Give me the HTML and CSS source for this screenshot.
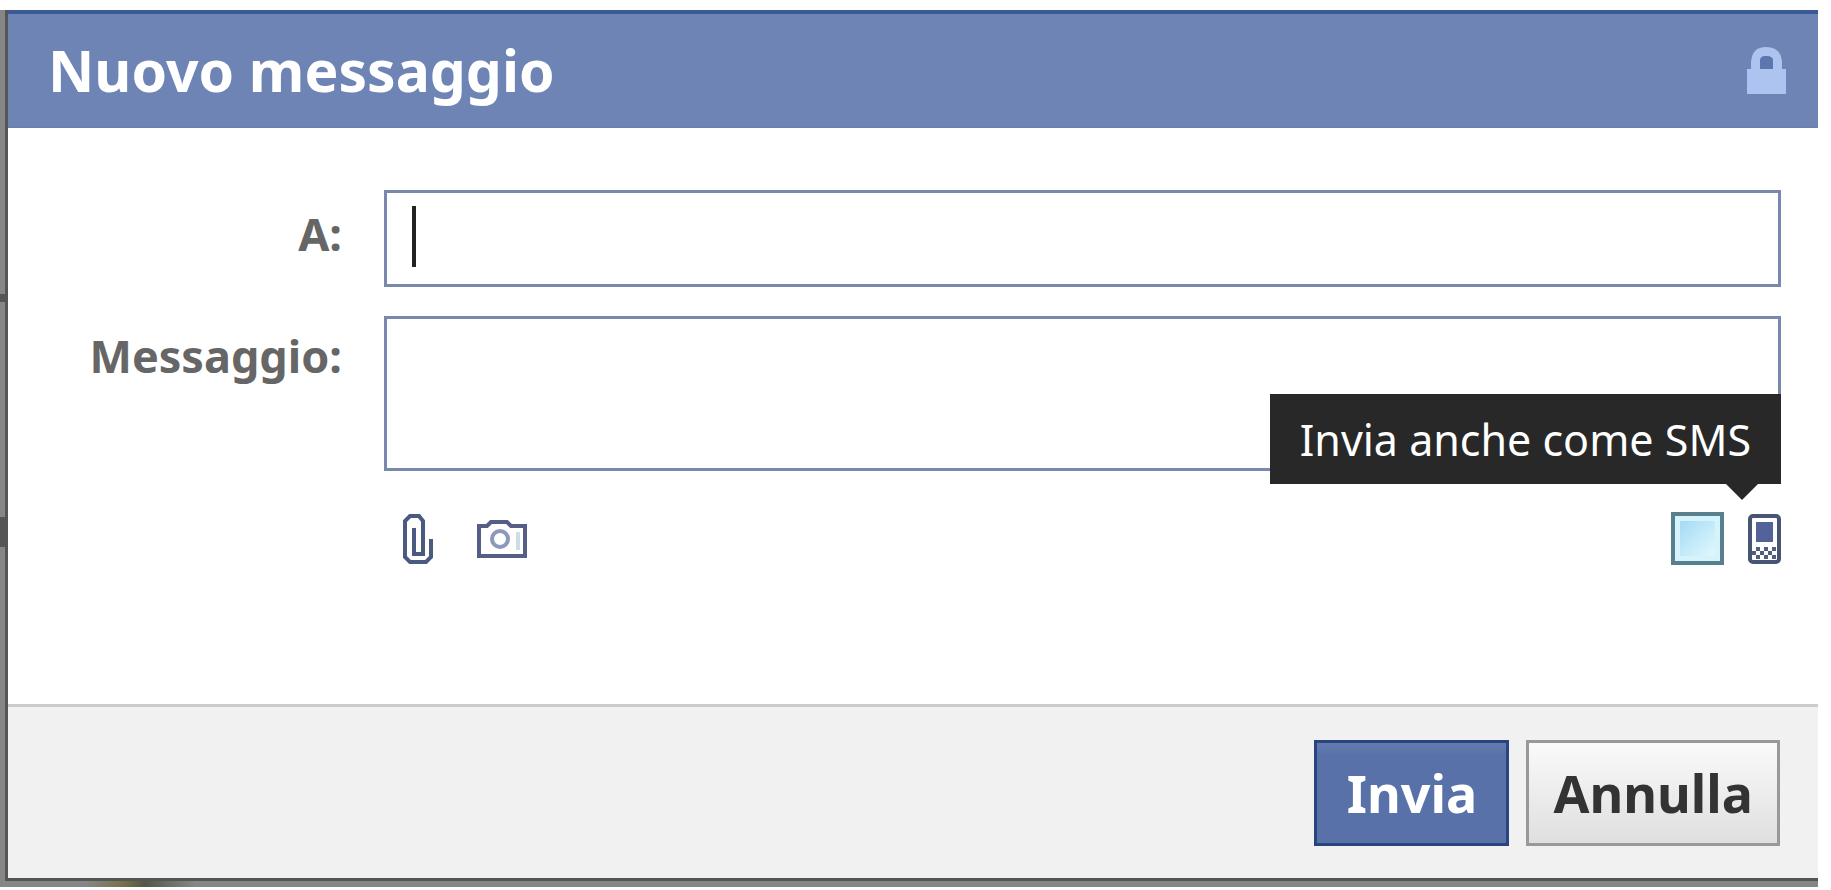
FILE: index.html
```
<!DOCTYPE html>
<html lang="it">
<head>
    <meta charset="UTF-8">
    <meta name="viewport" content="width=device-width, initial-scale=1.0">
    <title>Nuovo messaggio</title>
    <link rel="stylesheet" href="styles.css">
</head>
<body>
    <div class="backdrop">
        <form class="dialog">
            <div class="dialog-header">
                <h1 class="dialog-title">Nuovo messaggio</h1>
                <svg class="lock-icon" viewBox="0 0 39 47" aria-hidden="true">
                    <path fill="#adc4f0" fill-rule="evenodd" d="M4 22V15Q5 0 19 0Q34 0 35 15V22H39V47H0V22ZM13 22H26V14Q26 9 19 9Q13 9 13 14Z"/>
                    <path fill="#5c76ae" d="M13 22V14Q13 9 19 9Q26 9 26 14V22Z"/>
                </svg>
            </div>

            <div class="dialog-body">
                <div class="form-row">
                    <label class="form-label" for="to">A:</label>
                    <div class="field">
                        <input class="text-input" id="to" type="text" autocomplete="off">
                        <span class="caret"></span>
                    </div>
                </div>
                <div class="form-row">
                    <label class="form-label form-label-area" for="message">Messaggio:</label>
                    <div class="field">
                        <textarea class="text-area" id="message"></textarea>
                        <div class="tooltip" id="sms-tip" role="tooltip">Invia anche come SMS</div>
                    </div>
                </div>

                <div class="toolbar">
                    <button class="icon-button" type="button" aria-label="Allega file">
                        <svg width="30" height="50" viewBox="0 0 30 50" fill="none" stroke="#4b5a80" stroke-width="4">
                            <path d="M11 14V40H20V7L16 2H7L2 7V43L7 48H23L28 43V25"/>
                        </svg>
                    </button>
                    <button class="icon-button" type="button" aria-label="Scatta foto">
                        <svg width="50" height="38" viewBox="0 0 50 38" fill="none" stroke="#545e86" stroke-width="4">
                            <path d="M2 6H10L14 2H30L34 6H48V36H2Z"/>
                            <circle cx="23" cy="19" r="8" stroke="#8b9abb"/>
                            <path stroke="#cbdde8" d="M41 12V30"/>
                        </svg>
                    </button>
                    <div class="sms-option">
                        <input class="sms-check" id="sms" type="checkbox" aria-describedby="sms-tip">
                        <label class="sms-label" for="sms" aria-label="SMS">
                            <svg width="33" height="50" viewBox="0 0 33 50">
                                <rect x="2" y="2" width="29" height="46" rx="3" fill="#fff" stroke="#475472" stroke-width="4"/>
                                <path fill="#536299" d="M8 8H25V28H8Z"/>
                                <path fill="#53607d" d="M8 33h4v4h-4zM16 33h4v4h-4zM24 33h4v4h-4zM4 37h4v4h-4zM12 37h4v4h-4zM20 37h4v4h-4zM8 41h4v4h-4zM16 41h4v4h-4zM24 41h4v4h-4z"/>
                            </svg>
                        </label>
                    </div>
                </div>
            </div>

            <div class="dialog-footer">
                <button class="btn btn-primary" type="submit">Invia</button>
                <button class="btn btn-cancel" type="button">Annulla</button>
            </div>
        </form>
    </div>
</body>
</html>
```

FILE: styles.css
```
* {
    box-sizing: border-box;
}
body {
    margin: 0;
    background-color: #fff;
    font-family: "Noto Sans", "Open Sans", sans-serif;
}
/* Dimmed page showing on the left and under the dialog */
.backdrop {
    margin: 10px 13px 0 0;
    padding: 0 0 9px 8px;
    background:
        linear-gradient(90deg, transparent 85px, #77754f 120px, #555746 145px, transparent 195px) bottom / 100% 6px no-repeat,
        linear-gradient(transparent 284px, #555 284px, #555 292px, transparent 292px, transparent 507px, #555 507px, #555 537px, transparent 537px),
        #868686;
}
.dialog {
    background-color: #fff;
    box-shadow: 0 0 0 3px #555;
    clip-path: inset(0 0 -4px -4px);
}
.dialog-header {
    display: flex;
    align-items: center;
    justify-content: space-between;
    height: 118px;
    padding: 0 32px 0 40px;
    border-top: 4px solid #3b5998;
    border-bottom: 2px solid #6d7fac;
    background-color: #6d84b4;
}
.dialog-title {
    margin: 0;
    color: #fff;
    font-size: 57px;
    line-height: 80px;
    font-weight: 700;
}
.lock-icon {
    width: 39px;
    height: 47px;
}
.dialog-body {
    padding: 62px 37px 139px 42px;
}
.form-row {
    display: flex;
    gap: 42px;
    margin-bottom: 29px;
}
.form-label {
    width: 292px;
    padding-top: 14px;
    color: #666;
    font-size: 45px;
    line-height: 60px;
    font-weight: 700;
    text-align: right;
}
.form-label-area {
    padding-top: 10px;
}
.field {
    position: relative;
    flex: 1;
}
.text-input,
.text-area {
    display: block;
    width: 100%;
    padding: 12px 28px;
    border: 3px solid #7b88ae;
    border-radius: 0;
    outline: none;
    background-color: #fff;
    font: inherit;
    font-size: 45px;
}
.text-input {
    height: 97px;
}
.text-area {
    height: 155px;
    resize: none;
}
.caret {
    position: absolute;
    top: 16px;
    left: 28px;
    width: 4px;
    height: 61px;
    background-color: #222;
}
.tooltip {
    position: absolute;
    right: 0;
    bottom: -13px;
    padding: 16px 30px 14px;
    background-color: #282828;
    color: #fff;
    font-size: 43px;
    line-height: 60px;
    white-space: nowrap;
}
.tooltip::after {
    content: "";
    position: absolute;
    top: 100%;
    right: 23px;
    border: 16px solid transparent;
    border-top-color: #282828;
    border-bottom: 0;
}
.toolbar {
    display: flex;
    align-items: center;
    gap: 44px;
    margin-top: 41px;
    padding-left: 353px;
}
.icon-button {
    display: flex;
    padding: 0;
    border: 0;
    background: none;
    cursor: pointer;
}
.sms-option {
    display: flex;
    align-items: center;
    gap: 24px;
    margin-left: auto;
}
.sms-check {
    appearance: none;
    width: 53px;
    height: 53px;
    margin: 0;
    padding: 5px;
    border: 4px solid #587f8e;
    background:
        linear-gradient(135deg, #a4dbf5, #e1f8fc) content-box,
        #d5f3fa;
}
.sms-label {
    display: flex;
}
.dialog-footer {
    display: flex;
    justify-content: flex-end;
    gap: 17px;
    padding: 33px 38px 32px;
    border-top: 3px solid #ccc;
    background-color: #f1f1f1;
}
.btn {
    min-width: 195px;
    height: 106px;
    padding: 0 24px;
    border: 3px solid #999;
    font-family: inherit;
    font-size: 52px;
    line-height: 68px;
    font-weight: 700;
    cursor: pointer;
}
.btn-primary {
    border-color: #29447e;
    background: linear-gradient(#637bad, #5872a9 12px);
    color: #fff;
}
.btn-cancel {
    background: linear-gradient(#fafafa, #dfdfdf);
    color: #333;
}
```
